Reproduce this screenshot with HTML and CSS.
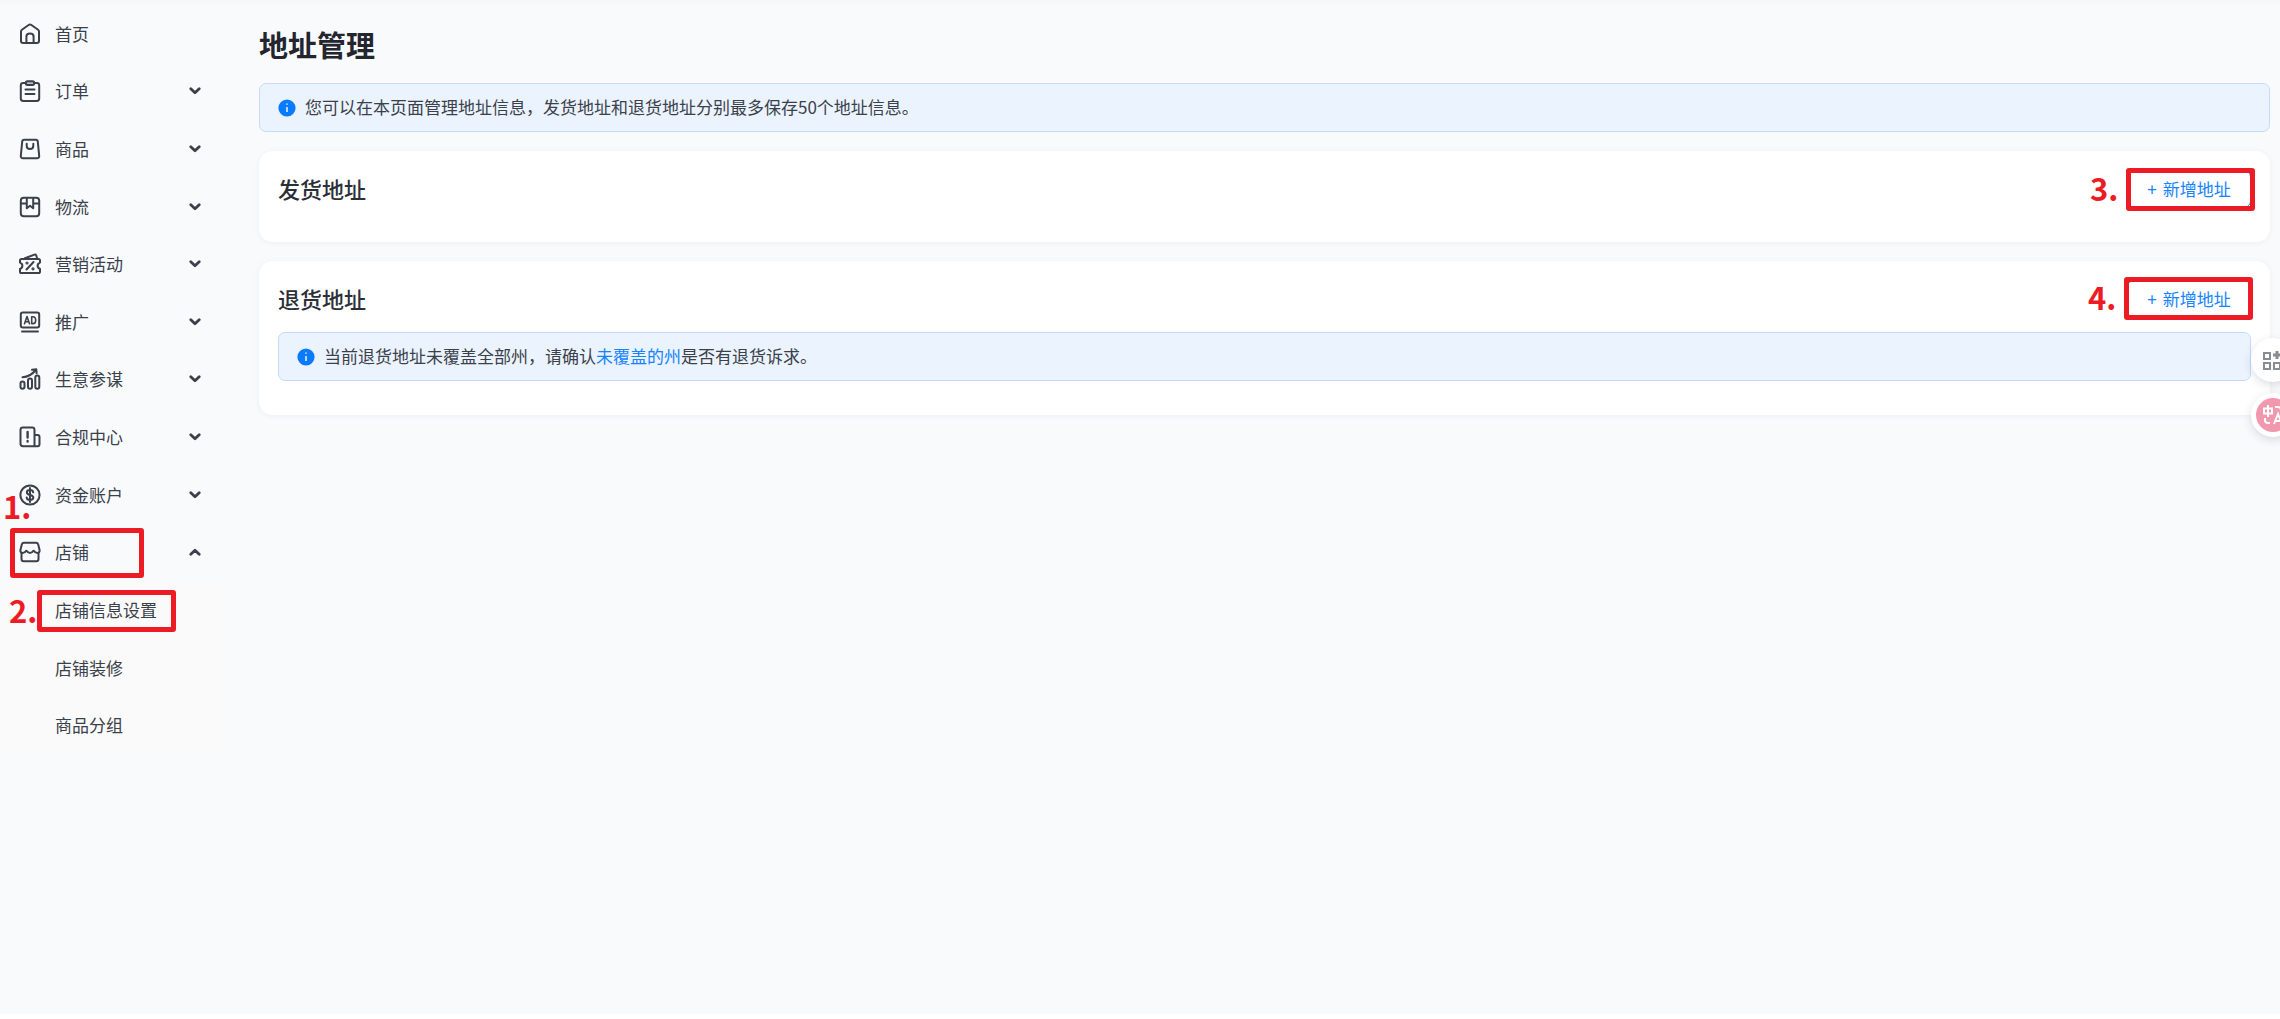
FILE: index.html
```html
<!DOCTYPE html>
<html lang="zh-CN">
<head>
    <meta charset="UTF-8">
    <meta name="viewport" content="width=device-width, initial-scale=1.0">
    <title>地址管理</title>
    <link rel="stylesheet" href="styles.css">
</head>
<body>
    <svg class="sprite" aria-hidden="true">
        <symbol id="chevron" viewBox="0 0 12 8">
            <path d="M1.8 1.8 6 5.8l4.2-4" stroke-width="2.8"/>
        </symbol>
        <symbol id="info" viewBox="0 0 18 18">
            <circle cx="9" cy="9" r="8.6" fill="#0a7aff" stroke="none"/>
            <path d="M9 8v5M9 4.6v1.2" stroke="#fff" stroke-width="1.4" stroke-linecap="butt"/>
        </symbol>
    </svg>

    <div class="layout">
        <nav class="sidebar">
            <ul class="menu">
                <li>
                    <a class="menu-item" href="#">
                        <svg class="icon" viewBox="0 0 22 22"><path d="M2 8.600c0-.8.3-1.400.9-1.900L9.600 2c.9-.6 1.900-.6 2.800 0l6.700 4.700c.6.500.9 1.100.9 1.900v9.200c0 1.300-.8 2.200-2.200 2.200H4.200C2.800 20 2 19.100 2 17.800z"/><path d="M7.400 20v-6.500c0-1.800 1.300-3 3.600-3s3.600 1.200 3.600 3V20"/></svg>
                        <span>首页</span>
                    </a>
                </li>
                <li>
                    <a class="menu-item" href="#">
                        <svg class="icon" viewBox="0 0 22 22"><rect x="1.800" y="3" width="18.400" height="18" rx="2.400"/><rect x="6.800" y="1.300" width="8.400" height="3.600" rx="1.600" fill="#b9bec4"/><path d="M6.500 9.500h9M6.500 14h9"/></svg>
                        <span>订单</span>
                        <svg class="chevron"><use href="#chevron"/></svg>
                    </a>
                </li>
                <li>
                    <a class="menu-item" href="#">
                        <svg class="icon" viewBox="0 0 22 22"><path d="M5.200 1.800h11.600c1.200 0 1.900.6 2 1.800l1.400 14.200c.1 1.500-.7 2.400-2.200 2.400H4c-1.500 0-2.300-.9-2.200-2.400L3.200 3.600c.1-1.200.8-1.800 2-1.800z"/><path d="M7.700 5.800v2c0 2 1.300 3.300 3.300 3.300s3.300-1.300 3.300-3.300v-2"/></svg>
                        <span>商品</span>
                        <svg class="chevron"><use href="#chevron"/></svg>
                    </a>
                </li>
                <li>
                    <a class="menu-item" href="#">
                        <svg class="icon" viewBox="0 0 22 22"><rect x="1.800" y="1.800" width="18.400" height="18.400" rx="3"/><path d="M2 7.500h5.500M14.500 7.500H20M7.800 2v10.300l3.200-2.500 3.200 2.500V2"/></svg>
                        <span>物流</span>
                        <svg class="chevron"><use href="#chevron"/></svg>
                    </a>
                </li>
                <li>
                    <a class="menu-item" href="#">
                        <svg class="icon" viewBox="0 0 22 22"><path d="M2.500 6h17c1 0 1.500.6 1.500 1.600v2c-1.600.6-2.400 1.700-2.400 3.200s.8 2.600 2.400 3.200v2.400c0 1-.5 1.600-1.500 1.600h-17C1.500 20 1 19.400 1 18.400V16c1.600-.6 2.400-1.700 2.400-3.200S2.600 10.200 1 9.600v-2C1 6.600 1.500 6 2.500 6z"/><path d="M6 5.200 15.500 1.600c.8-.3 1.400 0 1.700.7L18 5M14.500 9l-7 7.500"/><circle cx="8" cy="10" r=".6"/><circle cx="14" cy="15.800" r=".6"/></svg>
                        <span>营销活动</span>
                        <svg class="chevron"><use href="#chevron"/></svg>
                    </a>
                </li>
                <li>
                    <a class="menu-item" href="#">
                        <svg class="icon" viewBox="0 0 22 22"><rect x="1.800" y="1.500" width="18.400" height="15" rx="2"/><path d="M5.500 12.800 8 5.600l2.500 7.200M6.300 10.800h3.400M12.700 5.800v6.800h1.200c1.900 0 2.800-1.100 2.800-3.400s-.9-3.400-2.800-3.400z" stroke-width="1.600"/><path d="M3 20.500h16"/></svg>
                        <span>推广</span>
                        <svg class="chevron"><use href="#chevron"/></svg>
                    </a>
                </li>
                <li>
                    <a class="menu-item" href="#">
                        <svg class="icon" viewBox="0 0 22 22"><rect x="1.500" y="13.500" width="4" height="7.200" rx="2"/><rect x="9" y="10.500" width="4" height="10.200" rx="2"/><rect x="16.300" y="7.500" width="4" height="13.200" rx="2"/><path d="M3.500 9.300c5-.3 9.500-2.600 13.300-7.300M13 1.700l4.300-.4.300 4"/></svg>
                        <span>生意参谋</span>
                        <svg class="chevron"><use href="#chevron"/></svg>
                    </a>
                </li>
                <li>
                    <a class="menu-item" href="#">
                        <svg class="icon" viewBox="0 0 22 22"><path d="M15.500 20.200H4c-1.500 0-2.500-.8-2.500-2.400V4c0-1.500.8-2.400 2.400-2.400h9.200c1.600 0 2.400.9 2.400 2.400zM15.500 9h3c1.300 0 2 .7 2 2v7c0 1.400-.7 2.200-2 2.200h-3"/><path d="M8.600 6v5.500M8.600 15v.6" stroke-width="2.400"/></svg>
                        <span>合规中心</span>
                        <svg class="chevron"><use href="#chevron"/></svg>
                    </a>
                </li>
                <li>
                    <a class="menu-item" href="#">
                        <svg class="icon" viewBox="0 0 22 22"><circle cx="11" cy="11" r="9.600"/><path d="M14.200 8.300c-.2-1.500-1.400-2.200-3.200-2.200-1.900 0-3.100.8-3.100 2.300 0 3.400 6.400 1.700 6.400 5.100 0 1.600-1.300 2.400-3.300 2.400-1.900 0-3.100-.8-3.300-2.300M11 4v14"/></svg>
                        <span>资金账户</span>
                        <svg class="chevron"><use href="#chevron"/></svg>
                    </a>
                </li>
                <li class="open">
                    <a class="menu-item" href="#">
                        <svg class="icon" viewBox="0 0 22 22"><path d="M5 1.800h12c1.200 0 1.900.6 2.200 1.700L20.600 9c.2 1.900-.7 3-2.300 3-1.800 0-2.700-1-3.700-2.300C13.600 11 12.700 12 11 12s-2.600-1-3.600-2.300C6.400 11 5.500 12 3.700 12c-1.600 0-2.500-1.100-2.300-3l1.400-5.500c.3-1.100 1-1.700 2.200-1.700z"/><path d="M2.500 12v6c0 1.500.8 2.300 2.300 2.300h12.400c1.500 0 2.300-.8 2.300-2.300v-6"/></svg>
                        <span>店铺</span>
                        <svg class="chevron"><use href="#chevron"/></svg>
                    </a>
                    <ul class="submenu">
                        <li><a class="menu-item" href="#">店铺信息设置</a></li>
                        <li><a class="menu-item" href="#">店铺装修</a></li>
                        <li><a class="menu-item" href="#">商品分组</a></li>
                    </ul>
                    <div class="mark mark-shop"><span>1.</span></div>
                    <div class="mark mark-settings"><span>2.</span></div>
                </li>
            </ul>
        </nav>

        <main class="content">
            <h1>地址管理</h1>

            <div class="notice">
                <svg><use href="#info"/></svg>
                <p>您可以在本页面管理地址信息，发货地址和退货地址分别最多保存50个地址信息。</p>
            </div>

            <section class="card">
                <div class="card-head">
                    <h2>发货地址</h2>
                    <div class="action">
                        <button type="button" class="btn-add"><span>+</span><span>新增地址</span></button>
                        <div class="mark mark-ship"><span>3.</span></div>
                    </div>
                </div>
            </section>

            <section class="card">
                <div class="card-head">
                    <h2>退货地址</h2>
                    <div class="action">
                        <button type="button" class="btn-add"><span>+</span><span>新增地址</span></button>
                        <div class="mark mark-return"><span>4.</span></div>
                    </div>
                </div>
                <div class="notice">
                    <svg><use href="#info"/></svg>
                    <p>当前退货地址未覆盖全部州，请确认<a href="#">未覆盖的州</a>是否有退货诉求。</p>
                </div>
            </section>
        </main>
    </div>

    <div class="float-tools">
        <button type="button" class="tool" aria-label="工具">
            <svg viewBox="0 0 44 44" fill="none" stroke="#8a8d90" stroke-width="2"><path d="M13 15h6v6h-6zM13 25h6v6h-6zM23 25h6v6h-6z"/><path d="M26 13v8M22 17h8" stroke-width="3"/></svg>
        </button>
        <button type="button" class="tool" aria-label="翻译">
            <svg viewBox="0 0 44 44" fill="none" stroke="#fff" stroke-width="2"><circle cx="22" cy="22" r="17" fill="#f197ae" stroke="none"/><path d="M13 15.500h8v5h-8zM17 12v12M24 14h3c2 0 3 1 3 3v2M14 25v2c0 2 1 3 3 3h2M23 31l4-10 4 10M24.500 28h5"/></svg>
        </button>
    </div>
</body>
</html>
```
FILE: styles.css
```css
* {
    margin: 0;
    padding: 0;
    box-sizing: border-box;
}

body {
    font-family: "Noto Sans CJK SC", sans-serif;
    font-size: 17px;
    line-height: 24px;
    color: #3a414a;
    background: #fff;
    min-height: 100vh;
    padding-bottom: 5px;
    display: flex;
    overflow-x: hidden;
}

a {
    color: #1683ff;
    text-decoration: none;
}

ul {
    list-style: none;
}

.sprite {
    position: absolute;
    width: 0;
    height: 0;
}

.layout {
    flex: 1;
    display: flex;
    background: linear-gradient(#f5f6f8, #f9fafc 6px);
}

/* sidebar */
.sidebar {
    width: 227px;
    padding-top: 5px;
}

.menu {
    height: 749px;
    display: flex;
    flex-direction: column;
}

.menu > li {
    flex: 1;
    display: grid;
}

.menu > .open {
    flex: 4;
    position: relative;
    grid-template-rows: 1fr 3fr;
}

.menu-item {
    display: flex;
    align-items: center;
    gap: 14px;
    padding: 0 26px 0 19px;
    color: #3a414a;
}

.icon {
    width: 22px;
    height: 22px;
}

.icon,
.chevron,
.sprite {
    fill: none;
    stroke: #3a414a;
    stroke-width: 2;
    stroke-linecap: round;
    stroke-linejoin: round;
}

.chevron {
    width: 12px;
    height: 8px;
    margin-left: auto;
}

.open .chevron {
    transform: rotate(180deg);
}

.submenu {
    display: grid;
    grid-auto-rows: 1fr;
    background: #fafafa;
}

.submenu li {
    display: grid;
}

.submenu .menu-item {
    padding-left: 55px;
}

/* content */
.content {
    flex: 1;
    min-width: 0;
    padding: 24px 10px 0 32px;
}

h1 {
    font-size: 29px;
    line-height: 40px;
    color: #23262f;
    margin-bottom: 19px;
}

.notice {
    display: flex;
    align-items: center;
    gap: 9px;
    padding: 11px 18px;
    border: 1px solid #c4dbff;
    border-radius: 7px;
    background: #ebf3ff;
}

.notice svg {
    width: 18px;
    height: 18px;
}

.notice p {
    margin-bottom: 1px;
}

.card {
    margin-top: 19px;
    padding: 19px 19px 34px;
    border-radius: 14px;
    background: #fff;
    box-shadow: 0 1px 6px rgba(30, 40, 60, 0.05);
}

.card-head {
    display: flex;
    justify-content: space-between;
    align-items: center;
}

h2 {
    font-size: 22px;
    line-height: 36px;
    padding-bottom: 2px;
    font-weight: 500;
    color: #2b3038;
}

.card .notice {
    margin-top: 14px;
}

.action {
    position: relative;
}

.btn-add {
    display: flex;
    justify-content: center;
    align-items: center;
    gap: 6px;
    width: 124px;
    height: 38px;
    border: 1px solid #1683ff;
    border-radius: 7px;
    background: #fff;
    color: #1683ff;
    font: inherit;
}

/* numbered step marks drawn over the page */
.mark {
    position: absolute;
    border: 5px solid #ed1c24;
    border-radius: 3px;
    pointer-events: none;
}

.mark span {
    position: absolute;
    font-size: 31px;
    line-height: 32px;
    font-weight: 700;
    color: #ed1c24;
}

.mark-shop {
    left: 10px;
    top: 5px;
    width: 134px;
    height: 50px;
}

.mark-shop span {
    left: -12px;
    top: -43px;
}

.mark-settings {
    left: 37px;
    top: 67px;
    width: 139px;
    height: 42px;
}

.mark-settings span {
    left: -33px;
    top: -1px;
}

.mark-ship,
.mark-return {
    width: 129px;
    height: 43px;
}

.mark-ship {
    right: -4px;
    top: -2px;
}

.mark-return {
    right: -2px;
    top: -3px;
}

.mark-ship span,
.mark-return span {
    left: -41px;
    top: -1px;
}

/* buttons docked to the window edge */
.float-tools {
    position: fixed;
    right: -15px;
    top: 338px;
    display: grid;
    gap: 11px;
}

.tool {
    width: 44px;
    height: 44px;
    border: 0;
    border-radius: 50%;
    background: #fff;
    box-shadow: 0 3px 10px rgba(30, 40, 60, 0.15);
}
```
